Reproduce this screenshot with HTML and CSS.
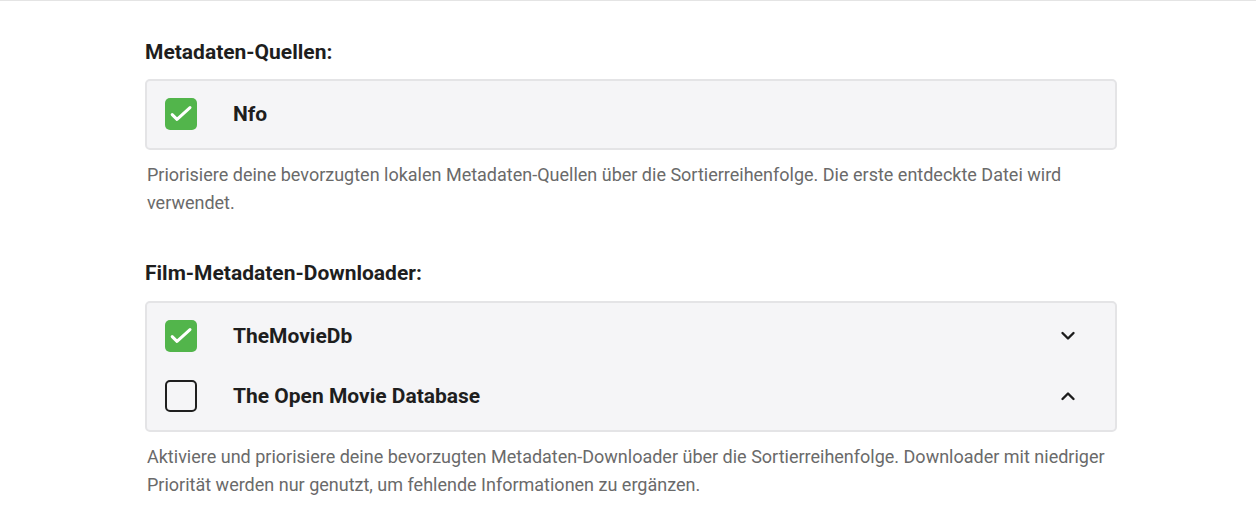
FILE: index.html
```html
<!DOCTYPE html>
<html lang="de">
<head>
<meta charset="utf-8">
<link rel="stylesheet" href="styles.css">
</head>
<body>
<div class="header-line"></div>
<main class="content">
  <p class="desc clipped">Die Einstellung wird bei allen Elementen der Bibliothek im System</p>

  <section class="section">
    <h3 class="heading">Metadaten-Quellen:</h3>
    <div class="list">
      <div class="item">
        <span class="check checked"><svg viewBox="0 0 32 32" width="32" height="32"><path d="M7.2 16.6L12 21.4L25 9.6" fill="none" stroke="#fff" stroke-width="3" stroke-linecap="round" stroke-linejoin="round"/></svg></span>
        <span class="label">Nfo</span>
      </div>
    </div>
    <p class="desc">Priorisiere deine bevorzugten lokalen Metadaten-Quellen über die Sortierreihenfolge. Die erste entdeckte Datei wird verwendet.</p>
  </section>

  <section class="section second">
    <h3 class="heading">Film-Metadaten-Downloader:</h3>
    <div class="list">
      <div class="item">
        <span class="check checked"><svg viewBox="0 0 32 32" width="32" height="32"><path d="M7.2 16.6L12 21.4L25 9.6" fill="none" stroke="#fff" stroke-width="3" stroke-linecap="round" stroke-linejoin="round"/></svg></span>
        <span class="label">TheMovieDb</span>
        <span class="chev"><svg viewBox="0 0 16 16" width="16" height="16"><path d="M2.5 5L8 10.5L13.5 5" fill="none" stroke="#1c1c1c" stroke-width="2.4" stroke-linecap="round" stroke-linejoin="round"/></svg></span>
      </div>
      <div class="item">
        <span class="check"></span>
        <span class="label">The Open Movie Database</span>
        <span class="chev"><svg viewBox="0 0 16 16" width="16" height="16"><path d="M2.5 11L8 5.5L13.5 11" fill="none" stroke="#1c1c1c" stroke-width="2.4" stroke-linecap="round" stroke-linejoin="round"/></svg></span>
      </div>
    </div>
    <p class="desc">Aktiviere und priorisiere deine bevorzugten Metadaten-Downloader über die Sortierreihenfolge. Downloader mit niedriger Priorität werden nur genutzt, um fehlende Informationen zu ergänzen.</p>
  </section>
</main>
</body>
</html>
```
FILE: styles.css
```css
html, body {
  margin: 0;
  padding: 0;
  background: #ffffff;
  font-family: Roboto, "Liberation Sans", Arial, sans-serif;
  color: #1e1e1e;
  overflow: hidden;
}

.header-line {
  position: fixed;
  top: 0;
  left: 0;
  right: 0;
  height: 1px;
  background: #e4e4e4;
  z-index: 2;
}

.content {
  display: flow-root;
  width: 972px;
  margin-left: 145px;
}

.section {
  margin-top: 35px;
}

.section.second {
  margin-top: 43px;
}

.heading {
  margin: 0 0 14px 0;
  font-size: 21px;
  font-weight: 700;
  line-height: 26px;
  color: #1e1e1e;
}

.second .heading {
  margin-bottom: 15px;
}

.list {
  background: #f5f5f7;
  border: 2px solid #e4e4e6;
  border-radius: 5px;
  padding: 3px 0 4px 0;
}

.item {
  display: flex;
  align-items: center;
  height: 60px;
  padding-left: 18px;
}

.check {
  width: 32px;
  height: 32px;
  box-sizing: border-box;
  border: 2px solid #1f1f1f;
  border-radius: 5px;
  display: flex;
  align-items: center;
  justify-content: center;
  flex: none;
}

.check.checked {
  background: #52b54b;
  border: none;
}

.label {
  margin-left: 36px;
  font-size: 21px;
  font-weight: 700;
  flex: 1;
}

.chev {
  width: 40px;
  display: flex;
  justify-content: center;
  margin-right: 27px;
}

.desc {
  margin: 11px 0 0 2px;
  font-size: 18px;
  line-height: 28px;
  color: #6a6a6a;
}

.desc.clipped {
  margin: -24px 0 0 2px;
  height: 28px;
}
```
